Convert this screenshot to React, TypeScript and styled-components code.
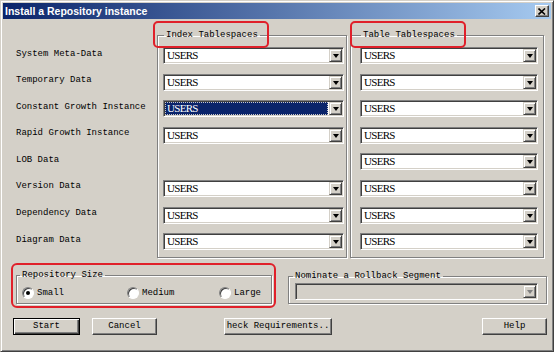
import React from 'react';
import styled, { createGlobalStyle, css } from 'styled-components';

const GlobalStyle = createGlobalStyle`
  body {
    margin: 0;
    background: #d4d0c8;
  }
  * {
    box-sizing: border-box;
  }
`;

const FACE = '#d4d0c8';
const MONO = `'Liberation Mono', 'DejaVu Sans Mono', monospace`;

const Window = styled.div`
  width: 554px;
  height: 352px;
  padding: 2px;
  border: 1px solid;
  border-color: ${FACE} #404040 #404040 ${FACE};
  box-shadow: inset 1px 1px #fff, inset -1px -1px #808080;
  background: ${FACE};
  display: flex;
  flex-direction: column;
  font-family: ${MONO};
  font-size: 9px;
  color: #000;
  overflow: hidden;
`;

const TitleBar = styled.div`
  height: 16px;
  display: flex;
  align-items: center;
  padding: 0 2px;
  background: linear-gradient(to right, #0a246a, #a6caf0);
`;

const Title = styled.span`
  flex: 1;
  font-family: 'Liberation Sans', Arial, sans-serif;
  font-weight: 700;
  font-size: 10.5px;
  line-height: 16px;
  color: #fff;
`;

const CloseButton = styled.div`
  width: 14px;
  height: 12px;
  background: ${FACE};
  border: 1px solid;
  border-color: #fff #404040 #404040 #fff;
  box-shadow: inset -1px -1px #808080;
  display: flex;
  align-items: center;
  justify-content: center;
`;

const TopGrid = styled.div`
  margin-top: 11px;
  display: grid;
  grid-template-columns: 154px 190px 197px;
  align-items: start;
`;

const LabelColumn = styled.div`
  padding: 18.5px 0 0 13px;
  display: flex;
  flex-direction: column;
  gap: 9.6px;
`;

const Label = styled.div`
  height: 17px;
  line-height: 11px;
  white-space: nowrap;
`;

const GroupBox = styled.fieldset<{ $pad: string }>`
  margin: 0;
  min-width: 0;
  padding: ${(p) => p.$pad};
  border: 1px solid #808080;
  box-shadow: inset 1px 1px #fff, 1px 1px #fff;
`;

const TableGroup = styled(GroupBox)`
  margin-left: 3px;
`;

const Legend = styled.legend<{ $indent: number; $marked?: boolean }>`
  position: relative;
  margin-left: ${(p) => p.$indent}px;
  padding: 0 2px;
  font-size: 9px;
  line-height: 11px;
  white-space: nowrap;

  ${(p) =>
    p.$marked &&
    css`
      &::after {
        content: '';
        position: absolute;
        left: -11px;
        right: -9px;
        top: -9px;
        bottom: -7px;
        border: 2px solid #e0202a;
        border-radius: 5px;
      }
    `}
`;

const ComboStack = styled.div`
  display: flex;
  flex-direction: column;
  gap: 9.6px;
`;

const Combo = styled.div<{ $disabled?: boolean }>`
  height: 17px;
  display: flex;
  border: 1px solid;
  border-color: #808080 #fff #fff #808080;
  box-shadow: inset 1px 1px #404040, inset -1px -1px ${FACE};
  background: ${(p) => (p.$disabled ? FACE : '#fff')};
  padding: 1px;
`;

const Blank = styled.div`
  height: 17px;
`;

const ComboText = styled.div<{ $selected?: boolean }>`
  flex: 1;
  padding-left: 2px;
  font-family: 'Liberation Serif', 'Times New Roman', serif;
  font-size: 11px;
  letter-spacing: -0.7px;
  line-height: 13px;
  color: #000;
  ${(p) =>
    p.$selected &&
    css`
      background: #0a246a;
      color: #fff;
      outline: 1px dotted #c8c8c8;
      outline-offset: -1px;
      margin-right: 1px;
    `}
`;

const DropButton = styled.div`
  width: 13px;
  height: 13px;
  flex: none;
  background: ${FACE};
  border: 1px solid;
  border-color: ${FACE} #404040 #404040 ${FACE};
  box-shadow: inset 1px 1px #fff, inset -1px -1px #808080;
  display: flex;
  align-items: center;
  justify-content: center;
`;

const Arrow = styled.span<{ $disabled?: boolean }>`
  width: 0;
  height: 0;
  border-left: 3.5px solid transparent;
  border-right: 3.5px solid transparent;
  border-top: 4px solid ${(p) => (p.$disabled ? '#808080' : '#000')};
  margin-top: 1px;
`;

const BottomRow = styled.div`
  margin-top: 5px;
  display: flex;
  align-items: flex-start;
`;

const RedFrame = styled.div`
  margin-left: 8px;
  width: 265px;
  height: 45px;
  padding: 5px 2px 2px 3px;
  border: 2px solid #e0202a;
  border-radius: 6px;
  display: flex;
`;

const SizeGroup = styled(GroupBox)`
  flex: 1;
`;

const RollbackGroup = styled(GroupBox)`
  margin: 7.5px 0 0 12px;
  width: 259px;
`;

const RadioRow = styled.div`
  display: grid;
  grid-template-columns: 105px 92px auto;
  align-items: center;
`;

const RadioItem = styled.label`
  display: flex;
  align-items: center;
  gap: 3px;
  line-height: 12px;
`;

const RadioCircle = styled.span<{ $checked?: boolean }>`
  width: 12px;
  height: 12px;
  border-radius: 50%;
  background: #fff;
  border: 1px solid;
  border-color: #808080 #fff #fff #808080;
  box-shadow: inset 1px 1px #404040;
  display: flex;
  align-items: center;
  justify-content: center;

  &::after {
    content: '';
    width: 4px;
    height: 4px;
    border-radius: 50%;
    background: ${(p) => (p.$checked ? '#000' : 'transparent')};
  }
`;

const ButtonRow = styled.div`
  margin-top: 10px;
  display: flex;
  padding: 0 4px 0 10px;
`;

const Button = styled.div<{ $width: number; $gap?: number; $default?: boolean }>`
  width: ${(p) => p.$width}px;
  height: 17px;
  margin-left: ${(p) => (p.$gap === undefined ? 'auto' : `${p.$gap}px`)};
  background: ${FACE};
  border: 1px solid;
  border-color: #fff #404040 #404040 #fff;
  box-shadow: inset -1px -1px #808080;
  display: flex;
  align-items: center;
  justify-content: center;
  line-height: 11px;
  white-space: nowrap;
  overflow: hidden;

  ${(p) =>
    p.$default &&
    css`
      border: 1px solid #000;
      box-shadow: inset 1px 1px #fff, inset -1px -1px #404040, inset -2px -2px #808080;
    `}
`;

type Row = { label: string; index: boolean; selected?: boolean };

const rows: Row[] = [
  { label: 'System Meta-Data', index: true },
  { label: 'Temporary Data', index: true },
  { label: 'Constant Growth Instance', index: true, selected: true },
  { label: 'Rapid Growth Instance', index: true },
  { label: 'LOB Data', index: false },
  { label: 'Version Data', index: true },
  { label: 'Dependency Data', index: true },
  { label: 'Diagram Data', index: true },
];

function ComboBox({ value, selected, disabled }: { value?: string; selected?: boolean; disabled?: boolean }) {
  return (
    <Combo $disabled={disabled}>
      <ComboText $selected={selected}>{value}</ComboText>
      <DropButton>
        <Arrow $disabled={disabled} />
      </DropButton>
    </Combo>
  );
}

function Radio({ label, checked }: { label: string; checked?: boolean }) {
  return (
    <RadioItem>
      <RadioCircle $checked={checked} />
      {label}
    </RadioItem>
  );
}

export default function App() {
  return (
    <>
      <GlobalStyle />
      <Window>
        <TitleBar>
          <Title>Install a Repository instance</Title>
          <CloseButton>
            <svg width="8" height="7" viewBox="0 0 8 7">
              <path d="M0.5 0.5 L7 6.5 M7 0.5 L0.5 6.5" stroke="#000" strokeWidth="1.6" />
            </svg>
          </CloseButton>
        </TitleBar>

        <TopGrid>
          <LabelColumn>
            {rows.map((r) => (
              <Label key={r.label}>{r.label}</Label>
            ))}
          </LabelColumn>

          <GroupBox $pad="6px 2px 7px 5px">
            <Legend $indent={1} $marked>
              Index Tablespaces
            </Legend>
            <ComboStack>
              {rows.map((r) =>
                r.index ? (
                  <ComboBox key={r.label} value="USERS" selected={r.selected} />
                ) : (
                  <Blank key={r.label} />
                )
              )}
            </ComboStack>
          </GroupBox>

          <TableGroup $pad="6px 5px 7px 9px">
            <Legend $indent={1} $marked>
              Table Tablespaces
            </Legend>
            <ComboStack>
              {rows.map((r) => (
                <ComboBox key={r.label} value="USERS" />
              ))}
            </ComboStack>
          </TableGroup>
        </TopGrid>

        <BottomRow>
          <RedFrame>
            <SizeGroup $pad="6px 4px 0 5px">
              <Legend $indent={-2}>Repository Size</Legend>
              <RadioRow>
                <Radio label="Small" checked />
                <Radio label="Medium" />
                <Radio label="Large" />
              </RadioRow>
            </SizeGroup>
          </RedFrame>
          <RollbackGroup $pad="1px 8px 3px 6px">
            <Legend $indent={-2}>Nominate a Rollback Segment</Legend>
            <ComboBox disabled />
          </RollbackGroup>
        </BottomRow>

        <ButtonRow>
          <Button $width={67} $gap={0} $default>
            Start
          </Button>
          <Button $width={65} $gap={12}>
            Cancel
          </Button>
          <Button $width={108} $gap={67}>
            heck Requirements..
          </Button>
          <Button $width={65}>Help</Button>
        </ButtonRow>
      </Window>
    </>
  );
}
